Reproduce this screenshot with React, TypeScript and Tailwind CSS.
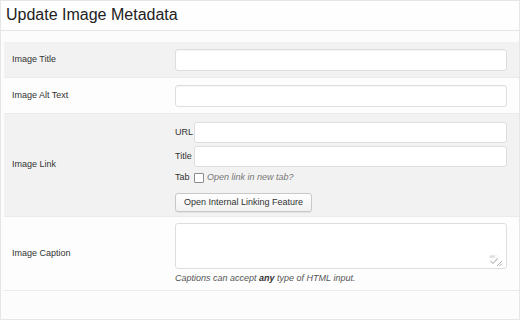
import React from "react";

const labelCls = "text-[9px] text-[#333] pl-2";
const inputCls =
  "block w-[332px] h-[22px] bg-white border border-[#dedede] rounded-[3px] shadow-[inset_0_1px_1px_rgba(0,0,0,0.04)]";

function Row({
  label,
  gray,
  className,
  children,
}: {
  label: string;
  gray?: boolean;
  className?: string;
  children: React.ReactNode;
}) {
  return (
    <div
      className={`flex items-center border-b border-[#ebebeb] ${
        gray ? "bg-[#f2f2f2]" : "bg-[#fdfdfd]"
      } ${className ?? ""}`}
    >
      <div className={`w-[171px] shrink-0 ${labelCls}`}>{label}</div>
      <div className="flex-1">{children}</div>
    </div>
  );
}

export default function App() {
  return (
    <div className="w-[520px] h-[320px] bg-white font-['Liberation_Sans',Arial,sans-serif] overflow-hidden">
      <div className="h-[31px] border border-[#e6e6e6] bg-[#fefefe] flex items-center pl-[5px] pb-[2px]">
        <h2 className="text-[16px] text-[#222] leading-none">Update Image Metadata</h2>
      </div>

      <div className="h-[289px] border-x border-b border-[#e6e6e6] bg-[#fcfcfc] pt-[11px] pl-[3px]">
        <Row label="Image Title" gray className="h-[36px]">
          <div className={inputCls} />
        </Row>
        <Row label="Image Alt Text" className="h-[36px]">
          <div className={inputCls} />
        </Row>
        <Row label="Image Link" gray className="h-[103px]">
          <div className="flex flex-col gap-[3px] pt-[4px] text-[9px] text-[#333]">
            <div className="flex items-center">
              <span className="w-[19px]">URL</span>
              <div className="w-[313px] h-[21px] bg-white border border-[#dedede] rounded-[3px]" />
            </div>
            <div className="flex items-center">
              <span className="w-[19px]">Title</span>
              <div className="w-[313px] h-[21px] bg-white border border-[#dedede] rounded-[3px]" />
            </div>
            <div className="flex items-center h-[16px]">
              <span className="w-[19px]">Tab</span>
              <span className="w-[10px] h-[10px] border border-[#8c8c8c] bg-white rounded-[1px]" />
              <span className="ml-[3px] italic text-[#777]">Open link in new tab?</span>
            </div>
            <div className="pt-[4px]">
              <button className="h-[19px] px-[8px] text-[9px] text-[#333] border border-[#c8c8c8] rounded-[3px] bg-gradient-to-b from-[#fefefe] to-[#f2f2f2] shadow-[0_1px_0_rgba(0,0,0,0.06)]">
                Open Internal Linking Feature
              </button>
            </div>
          </div>
        </Row>
        <Row label="Image Caption" className="h-[74px]">
          <div className="pt-[1px]">
            <div className="relative w-[332px] h-[46px] bg-white border border-[#dedede] rounded-[3px]">
              <svg
                className="absolute right-[3px] bottom-[2px]"
                width="14"
                height="12"
                viewBox="0 0 14 12"
                fill="none"
              >
                <text x="0.5" y="4" fontSize="3.5" fill="#c8c8c8" fontFamily="Liberation Sans">ABC</text>
                <path d="M1.5 7 L4 9.5 L8.5 4.5" stroke="#c4c4c4" strokeWidth="1.2" />
                <path d="M13 7 L8 12 M13 9.5 L10.5 12" stroke="#9a9a9a" strokeWidth="0.8" />
              </svg>
            </div>
            <p className="mt-[3px] text-[9px] italic text-[#555]">
              Captions can accept <b className="text-[#333]">any</b> type of HTML input.
            </p>
          </div>
        </Row>
      </div>
    </div>
  );
}
